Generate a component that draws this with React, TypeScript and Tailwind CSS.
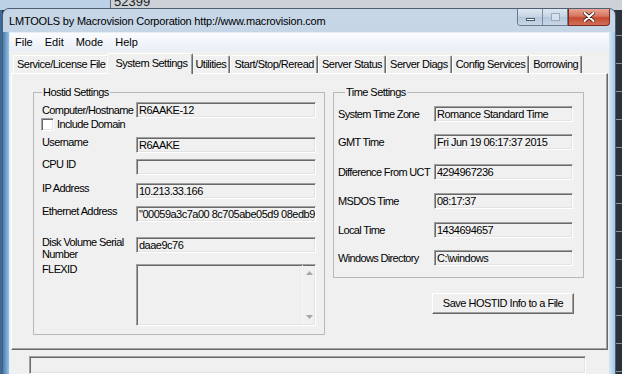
import React from "react";

function Field({ value = "", className = "" }: { value?: string; className?: string }) {
  return (
    <div
      className={`h-[16px] shrink-0 bg-[#f0f0f0] border border-t-[#a0a0a0] border-l-[#a0a0a0] border-b-white border-r-white shadow-[inset_1px_1px_0_#696969,inset_-1px_-1px_0_#e3e3e3] pl-[2px] text-[11px] leading-[14px] tracking-[-0.5px] text-black whitespace-nowrap overflow-hidden ${className}`}
    >
      {value}
    </div>
  );
}

function Tab({ label, selected = false }: { label: string; selected?: boolean }) {
  if (selected) {
    return (
      <div className="relative z-10 -mx-[2px] -mb-[1px] h-[21px] pl-[7px] pr-[5px] bg-[#f0f0f0] border-l border-t border-white border-r border-r-[#696969] shadow-[inset_-1px_0_0_#a0a0a0] rounded-t-[2px] text-[11px] leading-[19px] tracking-[-0.5px] text-black whitespace-nowrap">
        {label}
      </div>
    );
  }
  return (
    <div className="h-[18px] px-[3px] bg-[#f0f0f0] border-l border-t border-white border-r border-r-[#696969] shadow-[inset_-1px_0_0_#a0a0a0] rounded-t-[2px] text-[11px] leading-[17px] tracking-[-0.5px] text-black whitespace-nowrap">
      {label}
    </div>
  );
}

function LRow({ label, value, mt, center = false }: { label: string; value: string; mt: string; center?: boolean }) {
  return (
    <div className={`flex ${center ? "items-center" : "items-start"} h-[16px] ${mt}`}>
      <div className="w-[94px] shrink-0 text-[11px] leading-[11px] tracking-[-0.6px] text-black whitespace-nowrap">{label}</div>
      <Field value={value} className="w-[180px]" />
    </div>
  );
}

function RRow({ label, value, mt }: { label: string; value: string; mt: string }) {
  return (
    <div className={`flex items-center h-[16px] ${mt}`}>
      <div className="w-[96px] shrink-0 text-[11px] leading-[11px] tracking-[-0.65px] text-black whitespace-nowrap">{label}</div>
      <Field value={value} className="w-[139px]" />
    </div>
  );
}

export default function App() {
  return (
    <div className="relative w-[622px] h-[374px] overflow-hidden bg-[#2c333b] font-['Liberation_Sans',Arial,sans-serif]">
      {/* background desktop / windows behind */}
      <div className="absolute left-0 top-0 w-[622px] h-[10px] flex">
        <div className="w-[110px] h-full bg-[#bcd1e6]" />
        <div className="w-[1px] h-full bg-[#5f6b78]" />
        <div className="flex-1 h-full bg-[#cdd2d8] overflow-hidden">
          <div className="pl-[3px] -mt-[5px] text-[13px] leading-[13px] text-[#1e1e1e]">52399</div>
        </div>
      </div>
      <div className="absolute left-0 top-[10px] w-[2px] h-[364px] bg-[#3b6a98]" />
      <div className="absolute right-0 top-[10px] w-[6px] h-[364px] bg-[#2b3139] flex flex-col">
        {[26, 28, 28, 28, 28, 28, 28, 28, 28, 28, 28, 28, 28].map((h, i) => (
          <div key={i} style={{ height: h }} className="border-b border-[#8a9098] shrink-0" />
        ))}
      </div>

      {/* window */}
      <div className="absolute left-[2px] top-[8px] w-[614px] h-[380px] flex flex-col rounded-t-[7px] border border-[#4f5f71] bg-[linear-gradient(to_bottom,#c6d6e7,#bcd0e5)] overflow-hidden">
        {/* title bar */}
        <div className="h-[23px] flex items-start shrink-0">
          <div className="pl-[6px] pt-[6px] text-[11px] leading-[13px] tracking-[-0.2px] text-black whitespace-nowrap">
            LMTOOLS by Macrovision Corporation http://www.macrovision.com
          </div>
          <div className="ml-auto mr-[5px] flex">
            <div className="flex h-[17px] border border-t-0 border-[#6a7b8e] rounded-bl-[4px] overflow-hidden">
              <div className="w-[25px] h-full flex items-center justify-center bg-[linear-gradient(to_bottom,#dfe8f2,#c4d3e3_50%,#b5c7da_51%,#c8d7e7)] border-r border-[#7b8ca0]">
                <div className="w-[9px] h-[3px] mt-[5px] bg-white border border-[#4b5a6b]" />
              </div>
              <div className="w-[24px] h-full flex items-center justify-center bg-[linear-gradient(to_bottom,#dfe8f2,#c4d3e3_50%,#b5c7da_51%,#c8d7e7)]">
                <div className="w-[9px] h-[8px] border border-[#8fa0b3] bg-[#dce6f0] opacity-80" />
              </div>
            </div>
            <div className="w-[42px] h-[17px] flex items-center justify-center border border-t-0 border-[#7a2a1e] rounded-br-[4px] bg-[linear-gradient(to_bottom,#e8a493,#d6755f_45%,#c44a30_55%,#d2705a)]">
              <svg width="12" height="10" viewBox="0 0 12 10">
                <path d="M1.5 1 L10.5 9 M10.5 1 L1.5 9" stroke="#3a1a14" strokeWidth="3.6" strokeLinecap="round" />
                <path d="M1.5 1 L10.5 9 M10.5 1 L1.5 9" stroke="#ffffff" strokeWidth="2" strokeLinecap="round" />
              </svg>
            </div>
          </div>
        </div>

        {/* body */}
        <div className="flex flex-1">
          <div className="w-[6px] shrink-0 bg-[linear-gradient(to_right,#4d7cab,#93c2ea)]" />
          <div className="w-[600px] shrink-0 bg-[#f0f0f0] border-t border-l border-[#e8eef5] flex flex-col">
            {/* menu bar */}
            <div className="h-[18px] flex bg-[linear-gradient(to_bottom,#fbfcfe,#e9eff7)] text-[11px] leading-[18px] text-black shrink-0">
              <div className="pl-[5px] pr-[6px]">File</div>
              <div className="px-[6px]">Edit</div>
              <div className="px-[6px]">Mode</div>
              <div className="px-[6px]">Help</div>
            </div>

            {/* tabs */}
            <div className="mt-[2px] h-[20px] flex items-end pl-[3px] shrink-0">
              <Tab label="Service/License File" />
              <Tab label="System Settings" selected />
              <Tab label="Utilities" />
              <Tab label="Start/Stop/Reread" />
              <Tab label="Server Status" />
              <Tab label="Server Diags" />
              <Tab label="Config Services" />
              <Tab label="Borrowing" />
            </div>

            {/* tab panel */}
            <div className="ml-[1px] w-[597px] h-[277px] shrink-0 border-l border-t border-white border-r border-r-[#696969] border-b border-b-[#696969] shadow-[inset_-1px_-1px_0_#a0a0a0] pl-[21px] pt-[12px] flex gap-[8px] items-start">
              {/* Hostid settings */}
              <fieldset className="w-[292px] border border-[#b9b9b9] pl-[8px] pb-[8px]">
                <legend className="ml-[0px] px-[1px] text-[11px] leading-[12px] tracking-[-0.55px] text-black">Hostid Settings</legend>
                <LRow label="Computer/Hostname" value="R6AAKE-12" mt="mt-[4px]" center />
                <div className="flex items-center h-[13px] -ml-[1px]">
                  <div className="w-[13px] h-[13px] bg-white border border-t-[#a0a0a0] border-l-[#a0a0a0] border-b-white border-r-white shadow-[inset_1px_1px_0_#696969,inset_-1px_-1px_0_#e3e3e3]" />
                  <div className="ml-[3px] text-[11px] leading-[11px] tracking-[-0.6px] text-black">Include Domain</div>
                </div>
                <LRow label="Username" value="R6AAKE" mt="mt-[6px]" />
                <LRow label="CPU ID" value="" mt="mt-[6px]" />
                <LRow label="IP Address" value="10.213.33.166" mt="mt-[8px]" />
                <LRow label="Ethernet Address" value={'"00059a3c7a00 8c705abe05d9 08edb9d'} mt="mt-[7px]" />
                <div className="flex items-start h-[16px] mt-[15px]">
                  <div className="w-[94px] shrink-0 -mt-[1px] text-[11px] leading-[12px] tracking-[-0.6px] text-black">
                    Disk Volume Serial
                    <br />
                    Number
                  </div>
                  <Field value="daae9c76" className="w-[180px]" />
                </div>
                <div className="flex items-start mt-[11px]">
                  <div className="w-[94px] shrink-0 text-[11px] leading-[11px] tracking-[-0.6px] text-black">FLEXID</div>
                  <div className="w-[180px] h-[62px] flex bg-[#f0f0f0] border border-t-[#a0a0a0] border-l-[#a0a0a0] border-b-white border-r-white shadow-[inset_1px_1px_0_#696969,inset_-1px_-1px_0_#e3e3e3]">
                    <div className="flex-1" />
                    <div className="w-[13px] h-full flex flex-col justify-between items-center py-[6px] border-l border-[#f7f7f7]">
                      <svg width="7" height="4" viewBox="0 0 7 4"><path d="M0 4 L3.5 0 L7 4 Z" fill="#a6a6a6" /></svg>
                      <svg width="7" height="4" viewBox="0 0 7 4"><path d="M0 0 L7 0 L3.5 4 Z" fill="#a6a6a6" /></svg>
                    </div>
                  </div>
                </div>
              </fieldset>

              {/* Time settings */}
              <div className="w-[251px] flex flex-col">
                <fieldset className="w-[251px] border border-[#b9b9b9] pl-[4px] pb-[11px]">
                  <legend className="ml-[7px] px-[1px] text-[11px] leading-[12px] tracking-[-0.55px] text-black">Time Settings</legend>
                  <RRow label="System Time Zone" value="Romance Standard Time" mt="mt-[8px]" />
                  <RRow label="GMT Time" value="Fri Jun 19 06:17:37 2015" mt="mt-[12px]" />
                  <RRow label="Difference From UCT" value="4294967236" mt="mt-[14px]" />
                  <RRow label="MSDOS Time" value="08:17:37" mt="mt-[13px]" />
                  <RRow label="Local Time" value="1434694657" mt="mt-[13px]" />
                  <RRow label="Windows Directory" value="C:\windows" mt="mt-[12px]" />
                </fieldset>
                <div className="self-end mr-[10px] mt-[15px] w-[142px] h-[21px] flex items-center justify-center bg-[#f0f0f0] border border-t-white border-l-white border-b-[#696969] border-r-[#696969] shadow-[inset_-1px_-1px_0_#a0a0a0] text-[11px] tracking-[-0.5px] text-black">
                  Save HOSTID Info to a File
                </div>
              </div>
            </div>

            {/* status bar */}
            <div className="mt-[6px] ml-[19px] w-[557px] h-[18px] bg-[#f0f0f0] border border-t-[#a0a0a0] border-l-[#a0a0a0] border-b-white border-r-white shadow-[inset_1px_1px_0_#696969,inset_-1px_-1px_0_#e3e3e3]" />
          </div>
          <div className="flex-1 bg-[linear-gradient(to_right,#d8e6f3,#a4c8ea)]" />
        </div>
      </div>
    </div>
  );
}
